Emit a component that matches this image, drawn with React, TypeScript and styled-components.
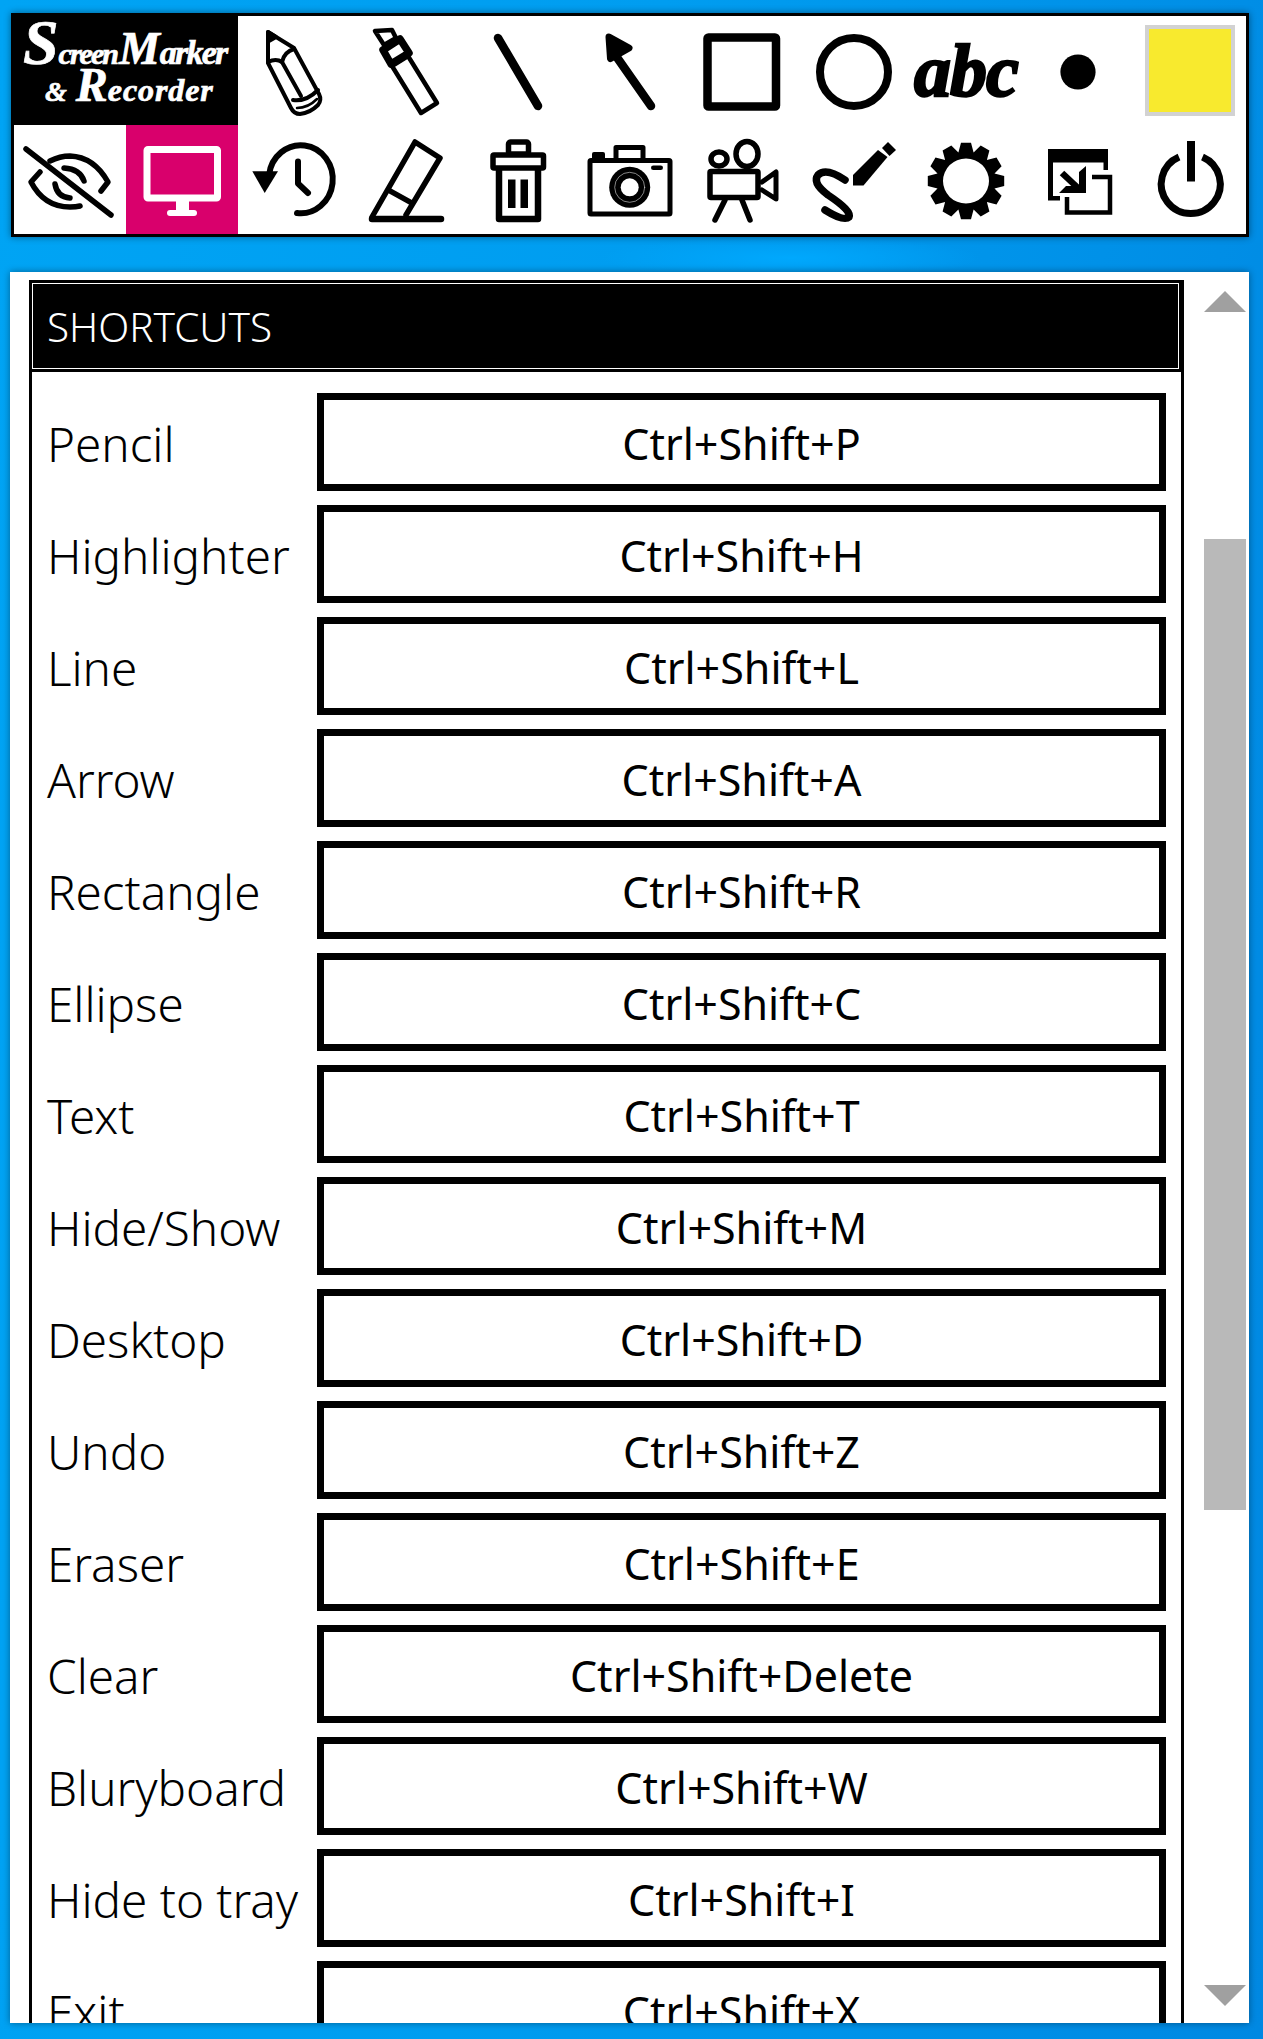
import { ReactNode } from 'react'
import styled, { createGlobalStyle } from 'styled-components'

const shortcuts = [
  ['Pencil', 'Ctrl+Shift+P'],
  ['Highlighter', 'Ctrl+Shift+H'],
  ['Line', 'Ctrl+Shift+L'],
  ['Arrow', 'Ctrl+Shift+A'],
  ['Rectangle', 'Ctrl+Shift+R'],
  ['Ellipse', 'Ctrl+Shift+C'],
  ['Text', 'Ctrl+Shift+T'],
  ['Hide/Show', 'Ctrl+Shift+M'],
  ['Desktop', 'Ctrl+Shift+D'],
  ['Undo', 'Ctrl+Shift+Z'],
  ['Eraser', 'Ctrl+Shift+E'],
  ['Clear', 'Ctrl+Shift+Delete'],
  ['Bluryboard', 'Ctrl+Shift+W'],
  ['Hide to tray', 'Ctrl+Shift+I'],
  ['Exit', 'Ctrl+Shift+X'],
]

const GlobalStyle = createGlobalStyle`
  html, body {
    margin: 0;
    padding: 0;
    height: 2039px;
    overflow: hidden;
  }
  body {
    font-family: "Noto Sans", "Open Sans", sans-serif;
    background:
      radial-gradient(ellipse 190px 22px at 790px 258px, rgba(0, 170, 255, 0.9), rgba(0, 170, 255, 0)),
      linear-gradient(96deg, #00a4f4 0%, #009df0 45%, #0088e2 100%);
  }
`

const Page = styled('div')`
  display: flex;
  flex-direction: column;
  align-items: flex-start;
  padding: 13px 0 0 10px;
  height: 2039px;
  box-sizing: border-box;
`

const Toolbar = styled('div')`
  display: grid;
  grid-template-columns: repeat(11, 112px);
  grid-auto-rows: 109px;
  margin-left: 1px;
  border: 3px solid #000;
  background: #fff;
  box-shadow: 0 0 7px rgba(0, 0, 0, 0.45);
`

const Logo = styled('div')`
  grid-column: span 2;
  display: flex;
  flex-direction: column;
  justify-content: center;
  margin: -3px 0 0 -3px;
  padding: 0 0 10px 3px;
  background: #000;
  color: #fff;
  font-family: "Liberation Serif", serif;
  font-style: italic;
  font-weight: 700;
  white-space: nowrap;
`

const LogoLine = styled('div')<{ $left: number }>`
  display: flex;
  align-items: baseline;
  height: 42px;
  padding-left: ${p => p.$left}px;
`

const LogoText = styled('span')<{ $size: number; $gap?: number; $after?: number }>`
  font-size: ${p => p.$size}px;
  line-height: 42px;
  letter-spacing: ${p => p.$gap ?? 0}px;
  margin-right: ${p => p.$after ?? 0}px;
  -webkit-text-stroke: 0.7px #fff;
`

const Cell = styled('div')<{ $active?: boolean }>`
  display: flex;
  align-items: center;
  justify-content: center;
  background: ${p => (p.$active ? '#d9006c' : '#fff')};
`

const Glyph = styled('svg')<{ $color?: string }>`
  display: block;
  width: 112px;
  height: 109px;
  fill: none;
  stroke: ${p => p.$color ?? '#000'};
  stroke-linecap: round;
  stroke-linejoin: round;
`

const AbcText = styled('span')`
  font-family: "Liberation Serif", serif;
  font-style: italic;
  font-weight: 700;
  font-size: 74px;
  line-height: 1;
  letter-spacing: -1px;
  color: #000;
  -webkit-text-stroke: 2.4px #000;
`

const Swatch = styled('div')`
  width: 90px;
  height: 91px;
  box-sizing: border-box;
  border: 4px solid #d2d2d2;
  background: #f8ea2e;
`

const Panel = styled('div')`
  display: flex;
  width: 1239px;
  height: 1751px;
  margin-top: 35px;
  background: #fff;
  overflow: hidden;
  box-shadow: 0 0 7px rgba(0, 0, 0, 0.4);
`

const Content = styled('div')`
  flex: 1;
  padding: 8px 0 0 19px;
  min-width: 0;
`

const Card = styled('div')`
  border-left: 3px solid #000;
  border-right: 3px solid #000;
  min-height: 1900px;
`

const Heading = styled('div')`
  display: flex;
  align-items: center;
  height: 92px;
  box-sizing: border-box;
  margin: 0 -1px 0 -3px;
  padding: 0 0 0 18px;
  background: #000;
  color: #fff;
  font-size: 40.4px;
  font-weight: 300;
  outline: 1px solid #fff;
  outline-offset: -4px;
`

const Rows = styled('div')`
  display: flex;
  flex-direction: column;
  gap: 14px;
  padding: 21px 15px 0 285px;
`

const Row = styled('div')`
  display: flex;
  align-items: center;
  margin-left: -270px;
`

const Label = styled('div')`
  width: 270px;
  flex: none;
  padding-top: 3px;
  color: #000;
  font-size: 47.6px;
  font-weight: 300;
  line-height: 1;
  white-space: nowrap;
`

const Key = styled('div')`
  flex: 1;
  height: 98px;
  box-sizing: border-box;
  display: flex;
  align-items: center;
  justify-content: center;
  border: 7px solid #000;
  color: #000;
  font-size: 43px;
  padding-top: 2px;
`

const Scrollbar = styled('div')`
  width: 65px;
  flex: none;
  box-sizing: border-box;
  padding: 19px 3px 0 20px;
  display: flex;
  flex-direction: column;
`

const ScrollArrow = styled('svg')`
  display: block;
  width: 42px;
  height: 21px;
  fill: #a0a0a0;
`

const Thumb = styled('div')`
  height: 971px;
  margin: 227px 0 475px;
  background: #b9b9b9;
`

function gearPath(cx: number, cy: number) {
  const teeth = 12
  const points: string[] = []
  for (let i = 0; i < teeth; i++) {
    const step = (Math.PI * 2) / teeth
    const a = i * step - Math.PI / 2
    const shape: [number, number][] = [
      [-0.5, 29.5],
      [-0.25, 38.5],
      [0.25, 38.5],
      [0.5, 29.5],
    ]
    shape.forEach(([off, r]) => {
      const t = a + off * step
      points.push(`${(cx + r * Math.cos(t)).toFixed(1)} ${(cy + r * Math.sin(t)).toFixed(1)}`)
    })
  }
  return `M${points.join(' L')}Z M${cx + 23} ${cy} A23 22.5 0 1 0 ${cx - 23} ${cy} A23 22.5 0 1 0 ${cx + 23} ${cy}Z`
}

const row1 = '0 -4 112 109'
const row2 = '0 0 112 109'

const PencilIcon = () => (
  <Glyph viewBox={row1} strokeWidth={4}>
    <path d="M30 12 L56 28 L81 74 Q84 80 80 85 Q72 93 62 94 Q56 94 53 88 L30 43Z" />
    <path d="M30 42 Q38 38 44 42 Q46 32 56 29" />
    <path d="M44 42 L63 76" />
    <path d="M55 80 Q68 82 80 70" />
    <path d="M59 88 Q70 88 79 79" strokeWidth={2.5} />
    <path d="M30 12 L38 17 L31 21Z" fill="#000" />
  </Glyph>
)

const HighlighterIcon = () => (
  <Glyph viewBox={row1} strokeWidth={4.5}>
    <path d="M25 11 L42 10 L46 18 L34 25Z" />
    <path d="M33 30 L50 19 L59 33 L41 44Z" strokeWidth={7.5} />
    <path d="M42 46 L58 36 L87 83 L71 93Z" />
  </Glyph>
)

const LineIcon = () => (
  <Glyph viewBox={row1} strokeWidth={8.5}>
    <path d="M36 18 L76 86" />
  </Glyph>
)

const ArrowIcon = () => (
  <Glyph viewBox={row1} strokeWidth={8.5}>
    <path d="M42 36 L77 86" />
    <path d="M35 17 L55 28 L36.5 38.5Z" fill="#000" strokeWidth={7} />
  </Glyph>
)

const RectIcon = () => (
  <Glyph viewBox={row1} strokeWidth={8.5}>
    <rect x="21.5" y="17.5" width="68.5" height="69" rx="1" />
  </Glyph>
)

const EllipseIcon = () => (
  <Glyph viewBox={row1} strokeWidth={8}>
    <circle cx="56" cy="52" r="34" />
  </Glyph>
)

const DotIcon = () => (
  <Glyph viewBox={row1} stroke="none">
    <circle cx="56" cy="52" r="17.6" fill="#000" stroke="none" />
  </Glyph>
)

const EyeIcon = () => (
  <Glyph viewBox={row2} strokeWidth={5.5}>
    <path d="M12 24 L97 90" />
    <path d="M36 36 Q46 31 56 31 Q80 32 94 57 L87 66" />
    <path d="M26 47 L17 57 Q30 82 56 82 Q62 82 66 81" />
    <path d="M50 43 Q66 44 70 56" />
    <path d="M41 59 Q43 72 56 73" />
  </Glyph>
)

const MonitorIcon = () => (
  <Glyph viewBox={row2} $color="#fff" strokeWidth={7}>
    <rect x="21" y="24.5" width="70.5" height="48.5" rx="1" />
    <rect x="50" y="76" width="13" height="10" fill="#fff" stroke="none" />
    <rect x="41" y="85" width="30" height="6" rx="3" fill="#fff" stroke="none" />
  </Glyph>
)

const UndoIcon = () => (
  <Glyph viewBox={row2} strokeWidth={6}>
    <path d="M31 50 A32 34 0 1 1 59 88" />
    <path d="M14.3 46.3 H40 L26.7 68Z" fill="#000" stroke="none" />
    <path d="M60 36.5 V58.5 L70 68" />
  </Glyph>
)

const EraserIcon = () => (
  <Glyph viewBox={row2} strokeWidth={5.5}>
    <path d="M56 90 L90 33 L65 17 L22 92" />
    <path d="M39 65.3 L60.7 77.3" />
    <path d="M22 94 H91" strokeWidth={6.5} />
  </Glyph>
)

const TrashIcon = () => (
  <Glyph viewBox={row2} strokeWidth={5.5}>
    <rect x="46.5" y="17" width="20" height="12" rx="2" />
    <rect x="31" y="30" width="50.5" height="13" rx="1" />
    <path d="M37 45 V94 H76 V45" strokeWidth={6.5} />
    <rect x="46" y="54.5" width="7.5" height="28.5" fill="#000" stroke="none" />
    <rect x="58.5" y="54.5" width="7.5" height="28.5" fill="#000" stroke="none" />
  </Glyph>
)

const CameraIcon = () => (
  <Glyph viewBox={row2} strokeWidth={5}>
    <rect x="16" y="35.5" width="80" height="53.5" rx="1" />
    <path d="M42 35 V22.5 H69 V35" />
    <rect x="18" y="27" width="13" height="8" rx="2" fill="#000" stroke="none" />
    <rect x="77" y="40.5" width="12" height="4.6" rx="2.3" fill="#000" stroke="none" />
    <circle cx="55.7" cy="62.3" r="20.5" fill="#000" stroke="none" />
    <circle cx="55.7" cy="62.3" r="15" stroke="#ddd" strokeWidth={0.6} />
    <circle cx="55.7" cy="62.3" r="9" fill="#fff" stroke="none" />
  </Glyph>
)

const VideoIcon = () => (
  <Glyph viewBox={row2} strokeWidth={5.5}>
    <ellipse cx="33" cy="34" rx="8" ry="7" />
    <ellipse cx="61" cy="29" rx="11" ry="12.5" />
    <rect x="24" y="46.5" width="48" height="26" rx="1" />
    <path d="M76 57 L90 47 V74 L76 65" strokeWidth={5} />
    <path d="M39 75 L29 95" />
    <path d="M56 75 L64 95" />
  </Glyph>
)

const SketchIcon = () => (
  <Glyph viewBox={row2} strokeWidth={7.5}>
    <path d="M47 55 Q28 42 20 50 Q14 58 30 70 Q54 86 51 92 Q46 97 27 85" />
    <path d="M55 60.5 V50 L80 25 L89.5 32 L65.5 60.5Z" fill="#000" stroke="none" />
    <path d="M84 23 L90 17 L98 25 L91.5 31Z" fill="#000" stroke="none" />
  </Glyph>
)

const GearIcon = () => (
  <Glyph viewBox={row2} stroke="none">
    <path d={gearPath(56, 56)} fill="#000" fillRule="evenodd" stroke="none" />
  </Glyph>
)

const ImportIcon = () => (
  <Glyph viewBox={row2} stroke="none">
    <path
      d="M26 24 H86 V45 H81.5 V37.5 H31 V71 H38 V75.5 H26Z"
      fill="#000"
      stroke="none"
    />
    <path
      d="M70 52 H88 V87.5 H45 V72"
      stroke="#000"
      strokeWidth={4.5}
      strokeLinecap="butt"
      strokeLinejoin="miter"
    />
    <path d="M64 41 V68 H37 L44 61 H57 V47Z" fill="#000" stroke="none" />
    <path d="M40 48 L56 63" stroke="#000" strokeWidth={6.5} strokeLinecap="butt" />
  </Glyph>
)

const PowerIcon = () => (
  <Glyph viewBox={row2} strokeWidth={7}>
    <path d="M45 32 A29.5 29.5 0 1 0 68.5 32" strokeLinecap="butt" />
    <path d="M57 16 V56.5" strokeWidth={8} strokeLinecap="butt" />
  </Glyph>
)

function Tool({ active, children }: { active?: boolean; children: ReactNode }) {
  return <Cell $active={active}>{children}</Cell>
}

export default function App() {
  return (
    <Page>
      <GlobalStyle />
      <Toolbar>
        <Logo>
          <LogoLine $left={9}>
            <LogoText $size={64}>S</LogoText>
            <LogoText $size={30} $gap={-2} $after={2}>creen</LogoText>
            <LogoText $size={46}>M</LogoText>
            <LogoText $size={34} $gap={-1.8}>arker</LogoText>
          </LogoLine>
          <LogoLine $left={31}>
            <LogoText $size={28} $after={9}>&amp;</LogoText>
            <LogoText $size={48}>R</LogoText>
            <LogoText $size={32} $gap={0.9}>ecorder</LogoText>
          </LogoLine>
        </Logo>
        <Tool><PencilIcon /></Tool>
        <Tool><HighlighterIcon /></Tool>
        <Tool><LineIcon /></Tool>
        <Tool><ArrowIcon /></Tool>
        <Tool><RectIcon /></Tool>
        <Tool><EllipseIcon /></Tool>
        <Tool><AbcText>abc</AbcText></Tool>
        <Tool><DotIcon /></Tool>
        <Tool><Swatch /></Tool>
        <Tool><EyeIcon /></Tool>
        <Tool active><MonitorIcon /></Tool>
        <Tool><UndoIcon /></Tool>
        <Tool><EraserIcon /></Tool>
        <Tool><TrashIcon /></Tool>
        <Tool><CameraIcon /></Tool>
        <Tool><VideoIcon /></Tool>
        <Tool><SketchIcon /></Tool>
        <Tool><GearIcon /></Tool>
        <Tool><ImportIcon /></Tool>
        <Tool><PowerIcon /></Tool>
      </Toolbar>
      <Panel>
        <Content>
          <Card>
            <Heading>SHORTCUTS</Heading>
            <Rows>
              {shortcuts.map(([name, keys]) => (
                <Row key={name}>
                  <Label>{name}</Label>
                  <Key>{keys}</Key>
                </Row>
              ))}
            </Rows>
          </Card>
        </Content>
        <Scrollbar>
          <ScrollArrow viewBox="0 0 42 21">
            <path d="M21 0 L42 21 H0Z" />
          </ScrollArrow>
          <Thumb />
          <ScrollArrow viewBox="0 0 42 21">
            <path d="M0 0 H42 L21 21Z" />
          </ScrollArrow>
        </Scrollbar>
      </Panel>
    </Page>
  )
}
